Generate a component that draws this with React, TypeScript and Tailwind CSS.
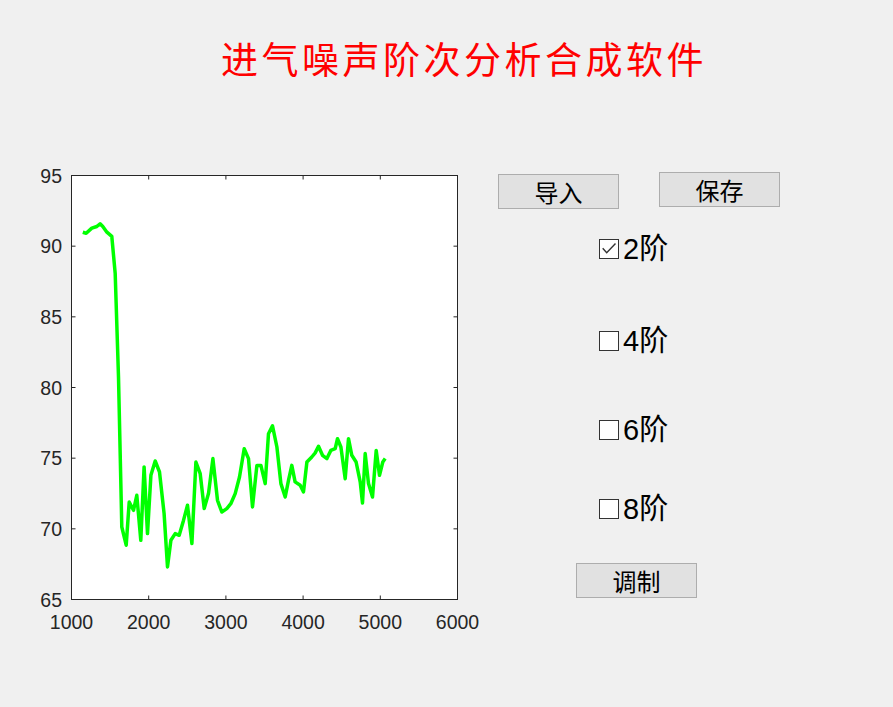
import React, { useState } from 'react';

// ──────────────────────────────────────────────────────────────────────────────
// 数据：进气噪声阶次曲线 (转速 rpm / 声压级 dB)
// ──────────────────────────────────────────────────────────────────────────────

const CURVA: [number, number][] = [
  [1147, 90.99], [1190, 90.92], [1263, 91.28], [1328, 91.39], [1371, 91.58], [1406, 91.39],
  [1458, 90.99], [1522, 90.69], [1566, 88.05], [1609, 80.74], [1652, 70.13], [1708, 68.84],
  [1747, 71.9], [1803, 71.31], [1846, 72.37], [1898, 69.19], [1941, 74.38], [1984, 69.66],
  [2028, 73.79], [2084, 74.8], [2140, 74.02], [2200, 71.08], [2244, 67.31], [2287, 69.19],
  [2343, 69.66], [2395, 69.54], [2451, 70.6], [2503, 71.67], [2559, 68.96], [2611, 74.73],
  [2667, 73.9], [2719, 71.43], [2775, 72.49], [2831, 74.97], [2891, 72.02], [2947, 71.19],
  [3012, 71.43], [3064, 71.78], [3120, 72.49], [3176, 73.67], [3237, 75.67], [3293, 74.97],
  [3345, 71.55], [3401, 74.49], [3453, 74.49], [3509, 73.2], [3552, 76.73], [3604, 77.28],
  [3660, 75.79], [3712, 73.2], [3768, 72.25], [3811, 73.43], [3854, 74.49], [3897, 73.32],
  [3962, 73.08], [4005, 72.61], [4049, 74.73], [4113, 75.08], [4157, 75.37], [4200, 75.84],
  [4251, 75.2], [4308, 74.97], [4359, 75.55], [4416, 75.67], [4446, 76.38], [4489, 75.79],
  [4545, 73.55], [4588, 76.38], [4631, 75.2], [4687, 74.73], [4739, 73.32], [4770, 71.83],
  [4804, 75.32], [4847, 73.2], [4899, 72.25], [4947, 75.55], [4990, 73.79], [5033, 74.73],
  [5063, 74.97],
];

// ejes
const AX = { left: 41.5, top: 15.5, w: 386, h: 424 };
const X_MIN = 1000, X_MAX = 6000, Y_MIN = 65, Y_MAX = 95;
const X_TICKS = [1000, 2000, 3000, 4000, 5000, 6000];
const Y_TICKS = [65, 70, 75, 80, 85, 90, 95];

const px = (f: number) => AX.left + ((f - X_MIN) / (X_MAX - X_MIN)) * AX.w;
const py = (db: number) => AX.top + AX.h - ((db - Y_MIN) / (Y_MAX - Y_MIN)) * AX.h;

const CJK = "font-['Noto_Sans_CJK_SC',sans-serif]";
const LABEL = "font-['Liberation_Sans','Noto_Sans_CJK_SC',sans-serif]";

// ──────────────────────────────────────────────────────────────────────────────
// Gráfico
// ──────────────────────────────────────────────────────────────────────────────

function Grafico() {
  const bottom = AX.top + AX.h;
  const right = AX.left + AX.w;
  const puntos = CURVA.map(([f, db]) => `${px(f).toFixed(1)},${py(db).toFixed(1)}`).join(' ');

  return (
    <svg width={450} height={480} className="shrink-0 ml-[30px]" style={{ fontFamily: 'Liberation Sans, Arial, sans-serif' }}>
      <rect x={AX.left} y={AX.top} width={AX.w} height={AX.h} fill="#ffffff" stroke="#262626" strokeWidth={1} />

      {X_TICKS.map((t) => (
        <g key={`x${t}`}>
          <line x1={px(t)} x2={px(t)} y1={bottom} y2={bottom - 4} stroke="#262626" />
          <line x1={px(t)} x2={px(t)} y1={AX.top} y2={AX.top + 4} stroke="#262626" />
          <text x={px(t)} y={469} textAnchor="middle" fontSize={19.5} fill="#262626">{t}</text>
        </g>
      ))}

      {Y_TICKS.map((t) => (
        <g key={`y${t}`}>
          <line x1={AX.left} x2={AX.left + 4} y1={py(t)} y2={py(t)} stroke="#262626" />
          <line x1={right} x2={right - 4} y1={py(t)} y2={py(t)} stroke="#262626" />
          <text x={32} y={py(t) + 7} textAnchor="end" fontSize={19.5} fill="#262626">{t}</text>
        </g>
      ))}

      <polyline points={puntos} fill="none" stroke="#00ff00" strokeWidth={3.5} strokeLinejoin="round" />
    </svg>
  );
}

// ──────────────────────────────────────────────────────────────────────────────
// Controles
// ──────────────────────────────────────────────────────────────────────────────

function Boton({ children, className = '' }: { children: React.ReactNode; className?: string }) {
  return (
    <button
      className={`w-[121px] h-[35px] bg-[#e1e1e1] border border-[#adadad] text-[24px] leading-none text-black flex items-center justify-center ${CJK} ${className}`}
    >
      {children}
    </button>
  );
}

function Casilla({ label, checked, onToggle, className = '' }: { label: string; checked: boolean; onToggle: () => void; className?: string }) {
  return (
    <label className={`h-[30px] flex items-center pl-[101px] cursor-pointer ${className}`} onClick={onToggle}>
      <span className="w-[20px] h-[20px] bg-white border border-[#333333] shrink-0 flex items-center justify-center">
        {checked && (
          <svg width={18} height={18} viewBox="0 0 18 18">
            <path d="M2.7 8.3 L6.7 12.7 L15.5 3.5" fill="none" stroke="#333333" strokeWidth={1.4} />
          </svg>
        )}
      </span>
      <span className={`ml-[4px] text-[29px] leading-none text-black ${LABEL}`}>{label}</span>
    </label>
  );
}

export default function App() {
  const [ordenes, setOrdenes] = useState<Record<string, boolean>>({ '2': true, '4': false, '6': false, '8': false });
  const toggle = (k: string) => setOrdenes((o) => ({ ...o, [k]: !o[k] }));

  return (
    <div className="w-[893px] h-[707px] bg-[#f0f0f0] overflow-hidden">
      {/* Título */}
      <div className={`pt-[40px] pl-[221px] text-[37px] leading-none tracking-[3.5px] text-[#ff0000] ${CJK}`}>
        进气噪声阶次分析合成软件
      </div>

      <div className="flex mt-[83px]">
        <Grafico />

        <div className="ml-[18px] flex flex-col">
          <div className="flex items-start">
            <Boton className="mt-[14px]">导入</Boton>
            <Boton className="mt-[12px] ml-[40px] w-[119px]">保存</Boton>
          </div>

          <Casilla label="2阶" checked={ordenes['2']} onToggle={() => toggle('2')} className="mt-[25px]" />
          <Casilla label="4阶" checked={ordenes['4']} onToggle={() => toggle('4')} className="mt-[62px]" />
          <Casilla label="6阶" checked={ordenes['6']} onToggle={() => toggle('6')} className="mt-[59px]" />
          <Casilla label="8阶" checked={ordenes['8']} onToggle={() => toggle('8')} className="mt-[49px]" />

          <Boton className="mt-[39px] ml-[78px]">调制</Boton>
        </div>
      </div>
    </div>
  );
}
